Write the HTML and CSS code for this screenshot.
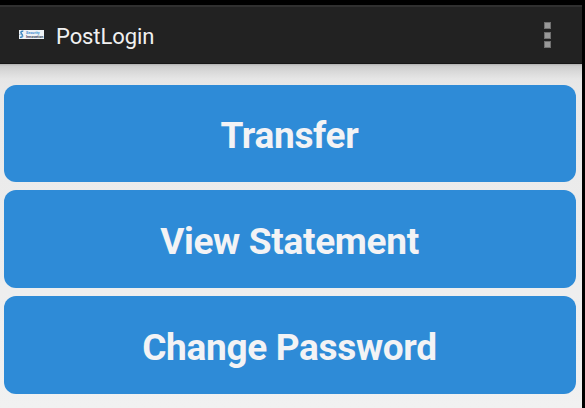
FILE: index.html
```html
<!DOCTYPE html>
<html lang="en">
<head>
<meta charset="utf-8">
<title>PostLogin</title>
<link rel="stylesheet" href="styles.css">
</head>
<body>
<div class="screen">
  <header class="bar">
    <svg class="logo" viewBox="0 0 25 9" aria-hidden="true">
      <rect width="25" height="9" fill="#eef2f6"/>
      <path d="M4.3 1.3C2 .8 1.2 2.5 2.6 3.8S3.8 7.8 1 7.3" fill="none" stroke="#3b86c2" stroke-width="1.5"/>
      <path d="M.5 4.5h1M3.8 5.5v1.5" stroke="#6aa4d0" stroke-width="1"/>
      <text class="logo-top" x="7" y="3.7" textLength="13.5" lengthAdjust="spacingAndGlyphs">Security</text>
      <text class="logo-bottom" x="7" y="7.7" textLength="17.3" lengthAdjust="spacingAndGlyphs">Innovation</text>
    </svg>
    <h1 class="title">PostLogin</h1>
    <div class="overflow"><i class="dot"></i><i class="dot"></i><i class="dot"></i></div>
  </header>
  <main class="content">
    <button class="action">Transfer</button>
    <button class="action">View Statement</button>
    <button class="action">Change Password</button>
  </main>
</div>
</body>
</html>
```
FILE: styles.css
```css
* { box-sizing: border-box; }

body {
  margin: 0;
  background: #000;
  font-family: Roboto, "Liberation Sans", sans-serif;
  overflow: hidden;
}

.screen {
  width: 582px;
  height: 408px;
  padding-top: 5px;
  display: flex;
  flex-direction: column;
}

.bar {
  height: 59px;
  flex: none;
  display: flex;
  align-items: center;
  padding: 0 31px 0 19px;
  background: #222;
  border-top: 2px solid #303030;
  border-bottom: 1px solid #161616;
}

.logo {
  width: 25px;
  height: 9px;
  margin: 0 12px 1px 0;
}

.logo-top {
  font-size: 3px;
  font-weight: 700;
  fill: #3f8fd0;
}

.logo-bottom {
  font-size: 3px;
  font-weight: 700;
  fill: #34495e;
}

.title {
  margin: 0;
  padding-top: 3px;
  flex: 1;
  font-size: 22px;
  font-weight: 400;
  line-height: 26px;
  letter-spacing: -0.1px;
  color: #f0f0f0;
}

.overflow {
  display: flex;
  flex-direction: column;
  gap: 2.5px;
}

.dot {
  width: 7px;
  height: 7px;
  background: #999;
  border: 1px solid #707070;
}

.content {
  flex: 1;
  display: flex;
  flex-direction: column;
  gap: 8px;
  padding: 20.5px 6.5px 0 3.5px;
  background: linear-gradient(#b0b0b0 0, #cccccc 2px, #d8d8d8 7px, #e6e6e6 15px, #e9e9e9 30px, #f1f1f1 100%);
}

.action {
  height: 97.7px;
  flex: none;
  padding: 6px 0 0;
  border: 0;
  border-radius: 12px;
  background: #2e8bd7;
  color: #f3f3f5;
  font: 700 37px/44px Roboto, "Liberation Sans", sans-serif;
  letter-spacing: -0.32px;
}
```
